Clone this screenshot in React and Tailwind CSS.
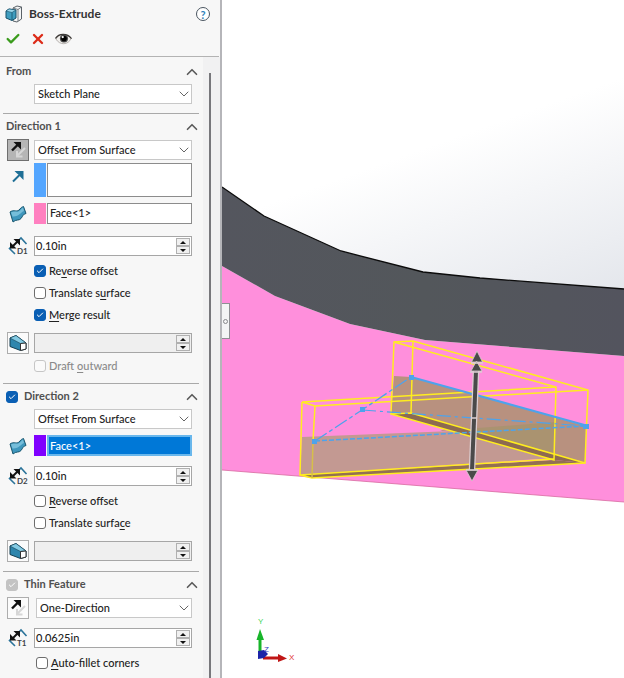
import { ChevronDown, ChevronUp, Check, X } from 'lucide-react'

function ExtrudeIcon() {
  return (
    <svg width="18" height="18" viewBox="0 0 18 18" aria-hidden="true">
      <path d="M8 3 L12 1 L16.500 2 V14 L12 17 L8 16 Z" fill="#f4f6f7" stroke="#5b6268" strokeWidth="1" />
      <path d="M13 16 V4.500 L16.500 2 M13 4.500 L8 3" fill="none" stroke="#5b6268" strokeWidth="0.8" />
      <path d="M1 6 L4 4 L11 5 V13 L7 15.500 L1 13 Z" fill="#3f9dbf" stroke="#17516b" strokeWidth="1" />
      <path d="M1 6 L7 7.500 L11 5 L4 4 Z" fill="#9ad6ea" stroke="#17516b" strokeWidth="0.6" />
      <path d="M7 7.500 V15" stroke="#17516b" strokeWidth="0.8" />
    </svg>
  )
}

function EyeIcon() {
  return (
    <svg width="17" height="14" viewBox="0 0 18 14" aria-hidden="true">
      <path d="M1 7 C4 1 13 1 17 6.500 C14 13.500 5 14 1 7 Z" fill="#f1efec" stroke="#a5a09b" strokeWidth="0.8" />
      <path d="M0.500 6.500 C4 0.500 13 0.500 17.500 6.500" fill="none" stroke="#3a3633" strokeWidth="1.300" />
      <circle cx="9.500" cy="6.500" r="4.300" fill="#4a4a4a" />
      <circle cx="9.500" cy="6.500" r="3" fill="#000" />
      <circle cx="8.200" cy="5" r="1.200" fill="#fff" />
    </svg>
  )
}

function ReverseIcon() {
  return (
    <svg width="20" height="20" viewBox="0 0 20 20" aria-hidden="true">
      <path d="M17 8 L10 15 M9 11 V16.500 H14.500" fill="none" stroke="#d6d6d6" strokeWidth="2" />
      <path d="M4 10.500 L11 3.500" stroke="#111" strokeWidth="2.400" />
      <path d="M5.500 2 H13 V9.500 L10.500 7 L8 4.500 Z" fill="#111" />
    </svg>
  )
}

function VectorIcon() {
  return (
    <svg width="16" height="16" viewBox="0 0 16 16" aria-hidden="true">
      <path d="M3 13.500 L10 6.500" stroke="#1f6f96" strokeWidth="2" />
      <path d="M4.500 3 H13.500 V12 L10.500 9 L9 7 L7 5.500 Z" fill="#1f6f96" />
    </svg>
  )
}

function SurfaceIcon() {
  return (
    <svg width="18" height="18" viewBox="0 0 18 18" aria-hidden="true">
      <path d="M1 7 C5 4 8 8 11 4 C12 2.500 13 2 14.500 1.500 L17 8.500 C14 9 14 11 12 13.500 C10 16 7 14 4 17 Z" fill="#3f97bd" stroke="#17566f" strokeWidth="1" />
      <path d="M2 7.500 C6 5 9 8.500 11.500 5 L14 2.500 L15 6 C12 7 10 12 3.500 11.500 Z" fill="#93d2ea" opacity="0.65" />
    </svg>
  )
}

function DimensionIcon({ name }) {
  return (
    <svg width="20" height="20" viewBox="0 0 20 20" aria-hidden="true">
      <path d="M11 4 L13 2 L18.500 8 M3 11 L1.500 12.500 L7 18" fill="none" stroke="#2a7399" strokeWidth="1.600" />
      <path d="M4 11 L10 5" stroke="#111" strokeWidth="2" />
      <path d="M2 12.500 V6 L8.500 12.500 Z M5.500 3 H12 V9.500 Z" fill="#111" />
      <text x="9" y="18" fontSize="8" fontWeight="700" fill="#3c4348" fontFamily="Lato, sans-serif">{name}</text>
    </svg>
  )
}

function DraftIcon() {
  return (
    <svg width="18" height="18" viewBox="0 0 18 18" aria-hidden="true">
      <path d="M1 4 L7 1.500 L17 9 V15 L11.500 16.500 L1 12.500 Z" fill="#2e86ad" stroke="#143f52" strokeWidth="1" />
      <path d="M1 4 L7 1.500 L17 9 L11.500 9.500 Z" fill="#84cbe4" stroke="#143f52" strokeWidth="0.6" />
      <path d="M11.500 9.500 L17 9 V15 L11.500 16.500 Z" fill="#fff" stroke="#333" strokeWidth="1" />
    </svg>
  )
}

function SectionTitle({ children, check, muted }) {
  return (
    <div className="flex h-[25px] items-center text-[11px] font-bold text-[#505050]">
      {check ? (
        <label className="flex items-center gap-[6px]">
          <Tick checked disabled={muted} />
          {children}
        </label>
      ) : (
        <h2>{children}</h2>
      )}
      <button className="-mr-0.5 ml-auto" aria-label="Collapse">
        <ChevronUp size={18} strokeWidth={2.2} className="text-[#5a5a5a]" />
      </button>
    </div>
  )
}

function Section({ className = '', children }) {
  return <section className={`ml-[3px] mr-1 border-t border-[#a9a9a9] pl-[3px] ${className}`}>{children}</section>
}

function Row({ icon, className = '', children }) {
  return (
    <div className={`flex items-center gap-[5px] pl-px pr-[7px] ${className}`}>
      <div className="flex w-[22px] shrink-0 items-center justify-center">{icon}</div>
      {children}
    </div>
  )
}

function IconButton({ label, pressed, children }) {
  return (
    <button
      aria-label={label}
      className={`flex size-[22px] items-center justify-center border ${pressed ? 'border-[#6f6f6f] bg-[#b5b5b5]' : 'border-[#adadad] bg-[#fbfbfb]'}`}
    >
      {children}
    </button>
  )
}

function Dropdown({ label, value, className = '' }) {
  return (
    <div className={`relative min-w-0 flex-1 ${className}`}>
      <select aria-label={label} className="block h-5 w-full appearance-none border border-[#c8c8c8] bg-white pl-[3px] text-[11px] leading-[18px] font-medium text-[#222]">
        <option>{value}</option>
      </select>
      <ChevronDown size={16} strokeWidth={1.5} className="pointer-events-none absolute right-0 top-[2px] text-[#666]" />
    </div>
  )
}

function Spinner({ label, value = '', disabled }) {
  return (
    <div className={`flex h-5 min-w-0 flex-1 border border-[#a6a6a6] p-px ${disabled ? 'bg-[#efefef]' : 'bg-white'}`}>
      <input aria-label={label} defaultValue={value} disabled={disabled} className="min-w-0 flex-1 text-[11px] font-medium text-[#222]" />
      <div className="flex w-[14px] flex-col">
        <button aria-label="Increase" className="flex flex-1 items-center justify-center border border-[#b0b0b0] bg-[#f0f0f0]">
          <svg width="6" height="3" viewBox="0 0 6 3"><path d="M0 3 L3 0 L6 3 Z" fill="#111" /></svg>
        </button>
        <button aria-label="Decrease" className="flex flex-1 items-center justify-center border border-[#b0b0b0] bg-[#f0f0f0]">
          <svg width="6" height="3" viewBox="0 0 6 3"><path d="M0 0 L3 3 L6 0 Z" fill="#111" /></svg>
        </button>
      </div>
    </div>
  )
}

function Tick({ checked, disabled }) {
  const look = checked
    ? disabled ? 'bg-[#c3c3c3] border-[#c3c3c3]' : 'bg-[#0a5fb4] border-[#0a5fb4]'
    : disabled ? 'bg-[#fafafa] border-[#c6c6c6]' : 'bg-white border-[#6d6d6d]'
  return (
    <span className="relative block size-3">
      <input type="checkbox" defaultChecked={checked} disabled={disabled} className={`block size-3 appearance-none rounded-[3px] border ${look}`} />
      {checked && <Check size={8} strokeWidth={3} className="pointer-events-none absolute left-0.5 top-0.5 text-white" />}
    </span>
  )
}

function CheckRow({ before = '', hot, after = '', checked, disabled, className = '' }) {
  return (
    <label className={`flex h-[22px] items-center gap-[3px] pl-7 text-[11px] font-medium ${disabled ? 'text-[#8a8a8a]' : 'text-[#222]'} ${className}`}>
      <Tick checked={checked} disabled={disabled} />
      <span>{before}<span className="underline underline-offset-2">{hot}</span>{after}</span>
    </label>
  )
}

function Selection({ label, color, value = '', active, className = 'h-[21px]' }) {
  return (
    <div className={`flex min-w-0 flex-1 gap-px ${className}`}>
      <span className={`w-3 shrink-0 ${color}`} />
      <div className={`min-w-0 flex-1 ${active ? 'border-2 border-[#69b7ec] bg-[#0078d7]' : 'border border-[#8c8c8c] bg-white px-px'}`}>
        <input
          aria-label={label}
          defaultValue={value}
          className={`block h-[17px] w-full pl-px text-[11px] font-medium ${active ? 'text-white' : 'text-[#222]'}`}
        />
      </div>
    </div>
  )
}

function PropertyPanel() {
  return (
    <aside className="flex h-screen w-[222px] shrink-0 flex-col overflow-hidden border-r-2 border-[#b5b5b9] bg-[#f7f7f7]">
      <header className="mr-px h-[57px] shrink-0 border-b border-[#b3b3b3] px-[5px] pt-[5px]">
        <div className="flex h-[18px] items-center gap-[6px]">
          <ExtrudeIcon />
          <h1 className="text-xs font-bold text-[#333]">Boss-Extrude</h1>
          <button aria-label="Help" className="ml-auto mr-1 flex size-[14px] items-center justify-center rounded-full border border-[#4a5560] bg-white text-[11px] font-bold leading-none text-[#2f7fb8]">?</button>
        </div>
        <div className="mt-1.5 flex h-5 items-center gap-[9px]">
          <button aria-label="OK"><Check size={16} strokeWidth={3.5} className="text-[#3a9b1c]" /></button>
          <button aria-label="Cancel"><X size={16} strokeWidth={3.5} className="text-[#dc2a17]" /></button>
          <button aria-label="Preview"><EyeIcon /></button>
        </div>
      </header>

      <div className="flex min-h-0 flex-1">
        <div className="min-w-0 flex-1 overflow-hidden">
          <Section className="border-transparent pb-[9px] pt-px">
            <SectionTitle>From</SectionTitle>
            <Row><Dropdown label="From" value="Sketch Plane" /></Row>
          </Section>

          <Section>
            <SectionTitle>Direction 1</SectionTitle>
            <Row icon={<IconButton label="Reverse direction" pressed><ReverseIcon /></IconButton>}>
              <Dropdown label="End condition" value="Offset From Surface" />
            </Row>
            <Row className="mt-0.5" icon={<div className="h-6"><VectorIcon /></div>}>
              <Selection label="Direction of extrusion" color="bg-[#54a6ff]" className="h-[34px]" />
            </Row>
            <Row className="mt-[6px]" icon={<SurfaceIcon />}>
              <Selection label="Face" color="bg-[#ff80c0]" value="Face<1>" />
            </Row>
            <Row className="mt-3" icon={<DimensionIcon name="D1" />}>
              <Spinner label="Offset distance" value="0.10in" />
            </Row>
            <CheckRow className="mt-1" before="Re" hot="v" after="erse offset" checked />
            <CheckRow before="Translate s" hot="u" after="rface" />
            <CheckRow hot="M" after="erge result" checked />
            <Row className="mt-[6px]" icon={<IconButton label="Draft"><DraftIcon /></IconButton>}>
              <Spinner label="Draft angle" disabled />
            </Row>
            <CheckRow className="mb-[6px] mt-px" before="Draft " hot="o" after="utward" disabled />
          </Section>

          <Section className="pb-[9px]">
            <SectionTitle check>Direction 2</SectionTitle>
            <Row><Dropdown label="End condition 2" value="Offset From Surface" /></Row>
            <Row className="mt-[6px]" icon={<SurfaceIcon />}>
              <Selection label="Face 2" color="bg-[#8000ff]" value="Face<1>" active />
            </Row>
            <Row className="mt-[10px]" icon={<DimensionIcon name="D2" />}>
              <Spinner label="Offset distance 2" value="0.10in" />
            </Row>
            <CheckRow className="mt-1" hot="R" after="everse offset" />
            <CheckRow before="Translate surfa" hot="c" after="e" />
            <Row className="mt-[6px]" icon={<IconButton label="Draft 2"><DraftIcon /></IconButton>}>
              <Spinner label="Draft angle 2" disabled />
            </Row>
          </Section>

          <Section>
            <SectionTitle check muted>Thin Feature</SectionTitle>
            <Row icon={<IconButton label="Reverse thin direction"><ReverseIcon /></IconButton>}>
              <Dropdown label="Thin type" value="One-Direction" className="ml-0.5" />
            </Row>
            <Row className="mt-[9px]" icon={<DimensionIcon name="T1" />}>
              <Spinner label="Thickness" value="0.0625in" />
            </Row>
            <CheckRow className="mt-1 ml-0.5" hot="A" after="uto-fillet corners" />
          </Section>
        </div>
        <div className="w-[17px] bg-[#f1f1f2] pl-[6px] pt-4">
          <div className="h-full w-0.5 bg-[#77777b]" />
        </div>
      </div>
    </aside>
  )
}

function Viewport() {
  return (
    <main className="relative h-screen min-w-0 flex-1 overflow-hidden bg-white">
      <svg className="block h-full w-full" viewBox="222 0 402 678" preserveAspectRatio="xMinYMin slice" role="img" aria-label="Model view">
        <defs>
          <linearGradient id="sky" x1="450" y1="60" x2="550" y2="340" gradientUnits="userSpaceOnUse">
            <stop offset="0.25" stopColor="#fff" />
            <stop offset="1" stopColor="#e1e4ea" />
          </linearGradient>
          <linearGradient id="band" x1="0" x2="1">
            <stop offset="0" stopColor="#54565e" />
            <stop offset="0.5" stopColor="#53575b" />
            <stop offset="1" stopColor="#53545e" />
          </linearGradient>
        </defs>
        <rect x="222" y="0" width="402" height="300" fill="url(#sky)" />
        <path d="M222 266 L275 296 L350 324 L425 340 L624 356 V502 L222 470 Z" fill="#ff8fdc" />
        <path d="M222 470 L624 502" stroke="#d8699f" strokeWidth="0.8" fill="none" />
        <path d="M222 187 L264 216 L341 251 L423 272 L480 278 L624 289 V356 L425 340 L350 324 L275 296 L222 266 Z" fill="url(#band)" />
        <path d="M222 187 L264 216 L341 251 L423 272 L480 278 L624 289" fill="none" stroke="#0c0c0c" strokeWidth="1.300" />

        {/* shaded lower half of both legs */}
        <path d="M302 437 L556 427 L554 458 L300 475 Z" fill="#c39992" />
        <path d="M394 376 L411 377 L586 426 L585 463 L391 414 Z" fill="#b8917f" />
        <path d="M440 431 L556 422 L554 457 L450 427 Z" fill="#aa9370" />
        <path d="M391 414 L411 413 L585 463 L554 460 Z" fill="#8d6a51" />
        <path d="M300 475 L554 460 L585 463 L312 478 Z" fill="#937052" />

        <g fill="none" stroke="#ffed1f" strokeWidth="1.500">
          <path d="M394 342 L413 341 L588 390 L585 463 L411 413 L391 414 Z" />
          <path d="M394 342 L556 387 L554 460 L391 414" />
          <path d="M413 341 L411 413" />
          <path d="M302 402 L556 387 M315 406 L588 390 M302 402 L315 406" />
          <path d="M302 402 L300 475 L554 459 M300 475 L312 478 L585 463" />
          <path d="M315 406 L313 441" />
          <path d="M313 441 L312 478" stroke="#d6bf4a" />
        </g>

        <g fill="none" stroke="#4da3ec">
          <path d="M411 377 L588 426" strokeWidth="2" />
          <path d="M315 441 L586 426" strokeWidth="1.500" strokeDasharray="5 2" />
          <path d="M315 441 L362 410 L411 377" strokeWidth="1.300" strokeDasharray="14 3 4 3" />
          <path d="M362 410 L586 426" strokeWidth="1.200" strokeDasharray="14 4 3 4" />
        </g>
        <g fill="#4da3ec">
          <rect x="312" y="439" width="5" height="5" />
          <rect x="360" y="407" width="5" height="5" />
          <rect x="409" y="375" width="5" height="5" />
          <rect x="583" y="424" width="6" height="5" />
        </g>

        {/* drag handle */}
        <path d="M476 371 L472 470" stroke="#dccfd2" strokeWidth="6.500" />
        <path d="M476 371 L472 470" stroke="#4a4a4a" strokeWidth="4" />
        <g fill="#4a4a4a" stroke="#dccfd2" strokeWidth="0.8">
          <path d="M477 351 L482.500 362 H471.500 Z" />
          <path d="M476.500 361 L482 371 H471 Z" />
          <path d="M466 470 H478 L472 481 Z" />
        </g>
        <path d="M471 363 H483 M470 372 H482 M466 470 H478 M471 418 H477" stroke="#dccfd2" strokeWidth="1.500" />

        {/* axis triad */}
        <path d="M260 656 V639" stroke="#18b52a" strokeWidth="3" />
        <path d="M256.500 640 L260 629 L264 640 Z" fill="#18b52a" />
        <path d="M263 658 H279" stroke="#c01616" strokeWidth="3" />
        <path d="M278 654 L287 658.500 L278 662 Z" fill="#c01616" />
        <path d="M258 651 L264 650 L268 654 L264 658 L258 659 Z" fill="#1c24a8" />
        <g fontFamily="Liberation Sans, sans-serif" fontSize="8">
          <text x="258" y="624" fill="#3bd65a">Y</text>
          <text x="264" y="652" fill="#3038c0">Z</text>
          <text x="289" y="660" fill="#e03030">X</text>
        </g>
      </svg>
      <button aria-label="Toggle panel" className="absolute left-0 top-[303px] flex h-9 w-2 items-center justify-center border border-l-0 border-[#8f8f93] bg-[#f4f4f5]">
        <span className="size-[5px] rounded-full border border-[#88888c]" />
      </button>
    </main>
  )
}

export default function App() {
  return (
    <div className="flex h-screen bg-white font-['Lato','Open_Sans',sans-serif]">
      <PropertyPanel />
      <Viewport />
    </div>
  )
}
